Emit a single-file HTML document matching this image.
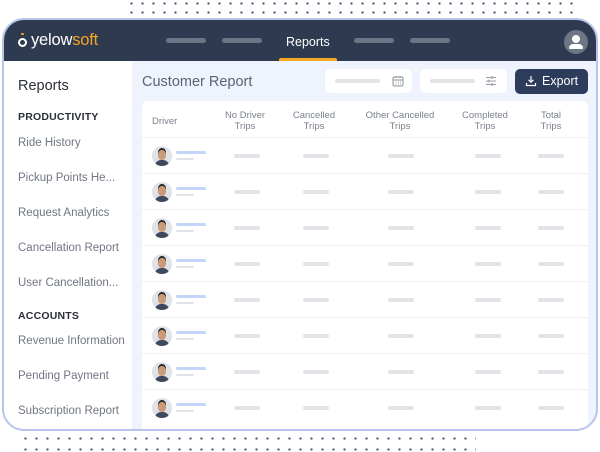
<!DOCTYPE html>
<html><head><meta charset="utf-8"><style>
*{margin:0;padding:0;box-sizing:border-box}
body{width:600px;height:452px;background:#fff;position:relative;overflow:hidden;font-family:"Liberation Sans",sans-serif}
.dots{position:absolute;height:3px;background-image:radial-gradient(circle,#44506e 1px,transparent 1.3px);background-size:11px 3px}
.frame{position:absolute;left:2px;top:18px;width:596px;height:413px;border:2px solid #b7c5ec;border-radius:22px;overflow:hidden;background:#eef3fd}
.in{position:absolute;left:-2px;top:0;width:600px;height:420px}
.hdr{position:absolute;left:0;top:0;width:100%;height:41px;background:#2d3a4f}
.pill{position:absolute;height:5px;border-radius:3px;background:#6c7687;top:18px}
.side{position:absolute;left:0;top:41px;width:130px;height:380px;background:#fff}
.side div{position:absolute;left:16px;font-size:11.5px;color:#707683;white-space:nowrap}
.side .h{font-weight:bold;color:#2b2f3a;font-size:10.5px;letter-spacing:.2px}
.card{position:absolute;left:140px;top:81px;width:446px;height:340px;background:#fff;border-radius:6px}
.th{position:absolute;font-size:9.5px;color:#7a808c;text-align:center;line-height:11px}
.row{position:absolute;left:0;width:446px;height:36px;border-top:1px solid #eef0f4}
.av{position:absolute;left:10px;top:8px;width:20px;height:20px;border-radius:50%;background:#dfe2e7;overflow:hidden}
.av:before{content:"";position:absolute;left:6px;top:4px;width:8px;height:10px;border-radius:45%;background:#c99a7c;box-shadow:0 -2px 0 #2a2a2a}
.av:after{content:"";position:absolute;left:3px;top:14px;width:14px;height:10px;border-radius:6px 6px 0 0;background:#3d4a5c}
.b1{position:absolute;left:34px;top:13px;width:30px;height:3px;border-radius:2px;background:#c4d5fb}
.b2{position:absolute;left:34px;top:20px;width:18px;height:2px;border-radius:1px;background:#e0e2e6}
.g{position:absolute;top:16px;width:26px;height:4px;border-radius:2px;background:#e2e3e6}
.box{position:absolute;top:49px;height:24px;background:#fff;border-radius:5px}
</style></head><body>
<div class="dots" style="left:126px;top:2px;width:452px"></div>
<div class="dots" style="left:126px;top:11px;width:452px"></div>
<div class="dots" style="left:20px;top:437px;width:456px"></div>
<div class="dots" style="left:20px;top:448px;width:456px"></div>
<div class="frame"><div class="in">
 <div class="hdr">
  <div style="position:absolute;left:16px;top:18px;width:9px;height:9px;border:2px solid #fff;border-radius:50%"></div>
  <div style="position:absolute;left:19px;top:13px;width:3px;height:2px;background:#f5a623;border-radius:1px"></div>
  <div style="position:absolute;left:29px;top:11px;font-size:16.5px;color:#fff;letter-spacing:-.2px">yelow<span style="color:#f5a623">soft</span></div>
  <div class="pill" style="left:164px;width:40px"></div>
  <div class="pill" style="left:220px;width:40px"></div>
  <div style="position:absolute;left:284px;top:15px;font-size:12.5px;color:#fff">Reports</div>
  <div style="position:absolute;left:277px;top:38px;width:58px;height:3px;background:#f5a623;border-radius:2px 2px 0 0"></div>
  <div class="pill" style="left:352px;width:40px"></div>
  <div class="pill" style="left:408px;width:40px"></div>
  <div style="position:absolute;left:562px;top:10px;width:24px;height:24px;border-radius:50%;background:#6c7687"></div>
  <div style="position:absolute;left:570px;top:15px;width:8px;height:8px;border-radius:50%;background:#fff"></div>
  <div style="position:absolute;left:567px;top:24px;width:14px;height:5px;border-radius:5px 5px 1px 1px;background:#fff"></div>
 </div>
 <div class="side">
  <div style="top:17px;font-size:14.5px;color:#2b2f3a">Reports</div>
  <div class="h" style="top:50px">PRODUCTIVITY</div>
  <div style="top:76px">Ride History</div>
  <div style="top:111px">Pickup Points He...</div>
  <div style="top:146px">Request Analytics</div>
  <div style="top:181px">Cancellation Report</div>
  <div style="top:216px">User Cancellation...</div>
  <div class="h" style="top:249px">ACCOUNTS</div>
  <div style="top:274px">Revenue Information</div>
  <div style="top:309px">Pending Payment</div>
  <div style="top:344px">Subscription Report</div>
 </div>
 <div style="position:absolute;left:140px;top:54px;font-size:14.5px;color:#5d6372">Customer Report</div>
 <div class="box" style="left:323px;width:87px">
  <div style="position:absolute;left:10px;top:10px;width:45px;height:4px;border-radius:2px;background:#e2e4e8"></div>
  <svg style="position:absolute;left:67px;top:6px" width="12" height="12" viewBox="0 0 12 12"><rect x="1" y="2" width="10" height="9" rx="1.5" fill="none" stroke="#8b909a" stroke-width="1"/><path d="M1 5h10M4 1v2M8 1v2" stroke="#8b909a"/><path d="M3.5 7h1M6 7h1M8 7h1M3.5 9h1M6 9h1M8 9h1" stroke="#8b909a" stroke-width=".8"/></svg>
 </div>
 <div class="box" style="left:418px;width:87px">
  <div style="position:absolute;left:10px;top:10px;width:45px;height:4px;border-radius:2px;background:#e2e4e8"></div>
  <svg style="position:absolute;left:65px;top:6px" width="12" height="12" viewBox="0 0 12 12"><path d="M1 2.5h10M1 6h10M1 9.5h10" stroke="#9aa0a9" stroke-width="1"/><path d="M7 1v3M4 4.5v3M7 8v3" stroke="#9aa0a9" stroke-width="1.2"/></svg>
 </div>
 <div style="position:absolute;left:513px;top:49px;width:73px;height:25px;background:#2d3c5a;border-radius:5px;color:#fff;font-size:12.5px">
  <svg style="position:absolute;left:10px;top:6px" width="12" height="12" viewBox="0 0 12 12"><path d="M6 1v6M3.5 4.8L6 7.3 8.5 4.8M1.5 8v2.5h9V8" fill="none" stroke="#fff" stroke-width="1.2"/></svg>
  <span style="position:absolute;left:27px;top:5px">Export</span>
 </div>
 <div class="card">
  <div class="th" style="left:10px;top:15px;text-align:left">Driver</div>
  <div class="th" style="left:73px;width:60px;top:9px">No Driver<br>Trips</div>
  <div class="th" style="left:142px;width:60px;top:9px">Cancelled<br>Trips</div>
  <div class="th" style="left:211px;width:94px;top:9px">Other Cancelled<br>Trips</div>
  <div class="th" style="left:310px;width:66px;top:9px">Completed<br>Trips</div>
  <div class="th" style="left:384px;width:50px;top:9px">Total<br>Trips</div>
  <div class="row" style="top:36px"><div class="av"></div><div class="b1"></div><div class="b2"></div><div class="g" style="left:92px"></div><div class="g" style="left:161px"></div><div class="g" style="left:246px"></div><div class="g" style="left:333px"></div><div class="g" style="left:396px"></div></div>
  <div class="row" style="top:72px"><div class="av"></div><div class="b1"></div><div class="b2"></div><div class="g" style="left:92px"></div><div class="g" style="left:161px"></div><div class="g" style="left:246px"></div><div class="g" style="left:333px"></div><div class="g" style="left:396px"></div></div>
  <div class="row" style="top:108px"><div class="av"></div><div class="b1"></div><div class="b2"></div><div class="g" style="left:92px"></div><div class="g" style="left:161px"></div><div class="g" style="left:246px"></div><div class="g" style="left:333px"></div><div class="g" style="left:396px"></div></div>
  <div class="row" style="top:144px"><div class="av"></div><div class="b1"></div><div class="b2"></div><div class="g" style="left:92px"></div><div class="g" style="left:161px"></div><div class="g" style="left:246px"></div><div class="g" style="left:333px"></div><div class="g" style="left:396px"></div></div>
  <div class="row" style="top:180px"><div class="av"></div><div class="b1"></div><div class="b2"></div><div class="g" style="left:92px"></div><div class="g" style="left:161px"></div><div class="g" style="left:246px"></div><div class="g" style="left:333px"></div><div class="g" style="left:396px"></div></div>
  <div class="row" style="top:216px"><div class="av"></div><div class="b1"></div><div class="b2"></div><div class="g" style="left:92px"></div><div class="g" style="left:161px"></div><div class="g" style="left:246px"></div><div class="g" style="left:333px"></div><div class="g" style="left:396px"></div></div>
  <div class="row" style="top:252px"><div class="av"></div><div class="b1"></div><div class="b2"></div><div class="g" style="left:92px"></div><div class="g" style="left:161px"></div><div class="g" style="left:246px"></div><div class="g" style="left:333px"></div><div class="g" style="left:396px"></div></div>
  <div class="row" style="top:288px"><div class="av"></div><div class="b1"></div><div class="b2"></div><div class="g" style="left:92px"></div><div class="g" style="left:161px"></div><div class="g" style="left:246px"></div><div class="g" style="left:333px"></div><div class="g" style="left:396px"></div></div>
 </div>
</div></div>
</body></html>
